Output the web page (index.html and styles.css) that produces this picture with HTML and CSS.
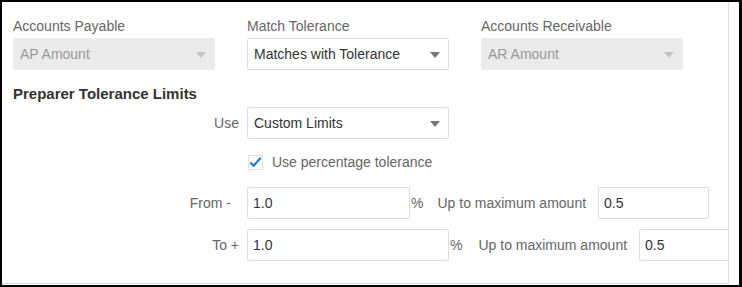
FILE: index.html
```html
<!DOCTYPE html>
<html>
<head>
  <title>Match Tolerance</title>
  <link rel="stylesheet" href="styles.css">
</head>
<body>
  <div class="frame">
    <div class="panel">

      <div class="top-row">
        <div class="field">
          <label>Accounts Payable</label>
          <div class="select disabled">AP Amount<span class="arrow"></span></div>
        </div>
        <div class="field">
          <label>Match Tolerance</label>
          <div class="select">Matches with Tolerance<span class="arrow"></span></div>
        </div>
        <div class="field">
          <label>Accounts Receivable</label>
          <div class="select disabled">AR Amount<span class="arrow"></span></div>
        </div>
      </div>

      <h3>Preparer Tolerance Limits</h3>

      <div class="form-row">
        <span class="row-label">Use</span>
        <div class="select">Custom Limits<span class="arrow"></span></div>
      </div>

      <div class="form-row check-row">
        <span class="row-label"></span>
        <span class="checkbox">
          <svg width="14" height="12" viewBox="0 0 14 12">
            <path d="M1.5 6.5 L5 10 L12.5 1.5" fill="none" stroke="#1a7fd0" stroke-width="2.4"/>
          </svg>
        </span>
        <span class="check-text">Use percentage tolerance</span>
      </div>

      <div class="form-row amount-row">
        <span class="row-label from">From -</span>
        <input class="text-input short" type="text" value="1.0">
        <span class="pct">%</span>
        <span class="max-label">Up to maximum amount</span>
        <input class="text-input max" type="text" value="0.5">
      </div>

      <div class="form-row amount-row to-row">
        <span class="row-label">To +</span>
        <input class="text-input" type="text" value="1.0">
        <span class="pct">%</span>
        <span class="max-label">Up to maximum amount</span>
        <input class="text-input max" type="text" value="0.5">
      </div>

    </div>
  </div>
</body>
</html>
```

FILE: styles.css
```css
* {
  margin: 0;
  padding: 0;
  box-sizing: border-box;
}

body {
  background: #000;
  font-family: "Liberation Sans", Arial, sans-serif;
  font-size: 14px;
  line-height: 20px;
  color: #333;
  overflow: hidden;
}

.frame {
  margin: 2px 0 0 2px;
  width: 737px;
  height: 283px;
  background: #fff;
}

.panel {
  width: 727px;
  height: 282px;
  border-right: 1px solid #ddd;
  border-bottom: 1px solid #ddd;
  padding: 14px 0 0 11px;
  overflow: hidden;
}

.top-row {
  display: flex;
  gap: 32px;
}

.field {
  width: 202px;
  display: flex;
  flex-direction: column;
}

.field label {
  color: #666;
  margin-bottom: 2px;
}

.select {
  position: relative;
  width: 202px;
  height: 32px;
  padding: 0 24px 0 6px;
  display: flex;
  align-items: center;
  border: 1px solid #ddd;
  border-radius: 2px;
  background: #fff;
  color: #333;
  white-space: nowrap;
}

.select.disabled {
  background: #ebebeb;
  border-color: #ebebeb;
  color: #999;
}

.arrow {
  position: absolute;
  right: 8px;
  top: 13px;
  width: 0;
  height: 0;
  border-left: 5px solid transparent;
  border-right: 5px solid transparent;
  border-top: 6px solid #777;
}

.select.disabled .arrow {
  border-top-color: #c4c4c4;
}

h3 {
  font-size: 15px;
  font-weight: bold;
  color: #333;
  margin-top: 14px;
  margin-bottom: 3px;
}

.form-row {
  display: flex;
  align-items: center;
  white-space: nowrap;
}

.form-row > * {
  flex-shrink: 0;
}

.row-label {
  width: 234px;
  padding-right: 8px;
  text-align: right;
  color: #666;
}

.row-label.from {
  padding-right: 16px;
}

.check-row {
  margin-top: 13px;
  height: 20px;
}

.checkbox {
  width: 15px;
  height: 15px;
  margin-left: 1px;
  border: 1px solid #e2e2e2;
  display: flex;
  align-items: center;
  justify-content: center;
}

.check-text {
  margin-left: 9px;
  color: #666;
}

.amount-row {
  margin-top: 15px;
}

.to-row {
  margin-top: 10px;
}

.text-input {
  width: 202px;
  height: 32px;
  padding: 0 5px;
  border: 1px solid #ddd;
  border-radius: 2px;
  font-family: inherit;
  font-size: 14px;
  color: #333;
}

.text-input.short {
  width: 163px;
}

.text-input.max {
  width: 111px;
}

.to-row .text-input.max {
  width: 120px;
}

.pct {
  margin-left: 1px;
  color: #666;
}

.max-label {
  margin-left: 14px;
  margin-right: 12px;
  color: #666;
}

.to-row .max-label {
  margin-left: 16px;
}
```
